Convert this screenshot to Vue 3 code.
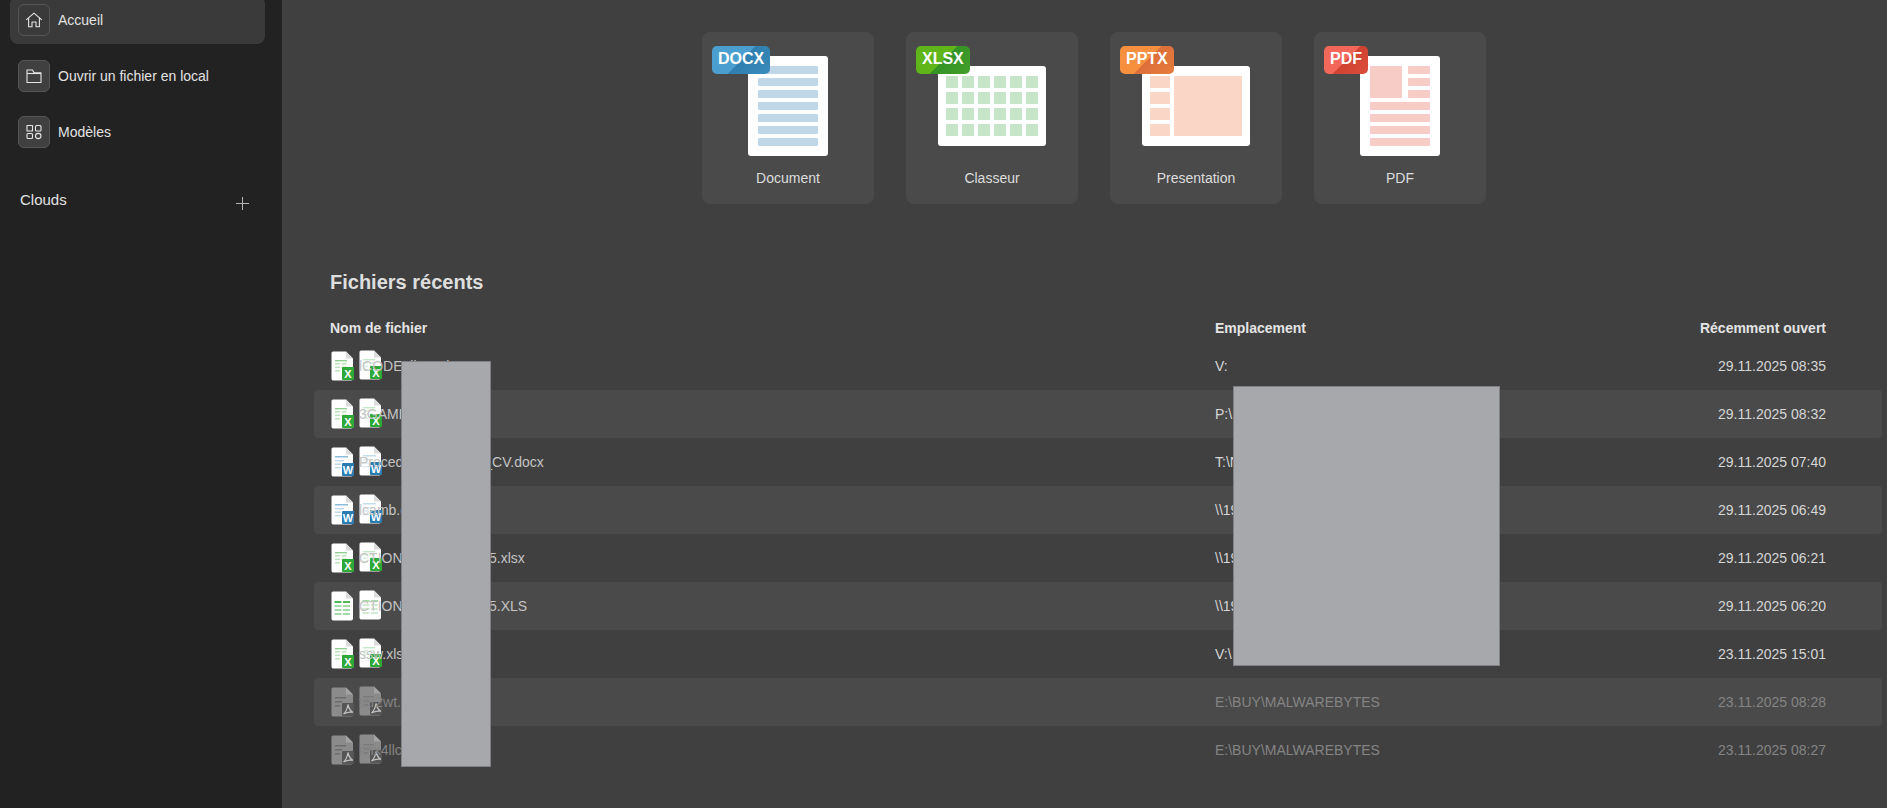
<template>
  <div class="app">
    <aside class="sidebar">
      <nav class="nav">
        <div v-for="item in navItems" :key="item.label" class="nav-item" :class="{ active: item.active }">
          <span class="nav-icon">
            <svg width="18" height="18" viewBox="0 0 18 18" fill="none" stroke="#e6e6e6" stroke-width="1.1" stroke-linejoin="round">
              <path v-for="d in item.paths" :key="d" :d="d" />
            </svg>
          </span>
          <span>{{ item.label }}</span>
        </div>
      </nav>
      <div class="clouds">
        <span>Clouds</span>
        <svg class="plus" width="13" height="13" viewBox="0 0 13 13" stroke="#b4b4b4" stroke-width="1">
          <path d="M6.5 0V13M0 6.5H13" />
        </svg>
      </div>
    </aside>

    <main class="main">
      <section class="cards">
        <div v-for="card in cards" :key="card.label" class="card">
          <svg class="card-art" width="172" height="130" viewBox="0 0 172 130">
            <rect :x="card.sheet[0]" :y="card.sheet[1]" :width="card.sheet[2]" :height="card.sheet[3]" rx="3" fill="#fff" />
            <rect v-for="(r, i) in card.rects" :key="i" :x="r[0]" :y="r[1]" :width="r[2]" :height="r[3]" rx="1" :fill="card.tint" />
          </svg>
          <span class="badge" :class="card.cls">{{ card.badge }}</span>
          <span class="card-label">{{ card.label }}</span>
        </div>
      </section>

      <h2 class="title">Fichiers récents</h2>

      <div class="table">
        <div class="row head">
          <span>Nom de fichier</span>
          <span>Emplacement</span>
          <span class="date">Récemment ouvert</span>
        </div>
        <div v-for="(f, i) in files" :key="i" class="row" :class="{ dim: f.type === 'pdf' }">
          <span class="name">
            <span class="icons">
              <svg v-for="n in 2" :key="n" class="file-icon" :class="{ ghost: n === 2 }" width="24" height="30" viewBox="0 0 24 30">
                <path d="M2 .5H15L22 7.5V27.5Q22 29.5 20 29.5H2Q.5 29.5 .5 27.5V2Q.5 .5 2 .5Z" :fill="f.type === 'pdf' ? '#8b8b8b' : '#fff'" />
                <path d="M15 .5V7.5H22Z" :fill="f.type === 'pdf' ? '#a3a3a3' : '#dcdcdc'" />
                <g v-if="f.type === 'xlsx'" class="lines" fill="#bfe3c0">
                  <rect x="4" y="9" width="12" height="1.4" fill="#8fd092" />
                  <rect x="4" y="12" width="5" height="1.6" />
                  <rect x="10.5" y="12" width="5" height="1.6" />
                  <rect x="4" y="15.5" width="5" height="1.6" />
                  <rect x="10.5" y="15.5" width="5" height="1.6" />
                  <rect x="4" y="19" width="5" height="1.6" />
                </g>
                <g v-if="f.type === 'xls'" class="lines" fill="#a6dba8">
                  <rect x="3.5" y="10" width="7" height="2" fill="#4fb855" />
                  <rect x="12" y="10" width="7" height="2" fill="#4fb855" />
                  <rect x="3.5" y="14" width="7" height="2" />
                  <rect x="12" y="14" width="7" height="2" />
                  <rect x="3.5" y="18" width="7" height="2" />
                  <rect x="12" y="18" width="7" height="2" />
                  <rect x="3.5" y="22" width="7" height="2" />
                  <rect x="12" y="22" width="7" height="2" />
                </g>
                <g v-if="f.type === 'docx'" class="lines" fill="#bcd6e8">
                  <rect x="4" y="9" width="13" height="1.5" fill="#8dbbdb" />
                  <rect x="4" y="13" width="9" height="1.4" />
                  <rect x="4" y="16.5" width="6" height="1.4" />
                  <rect x="4" y="20" width="6" height="1.4" />
                </g>
                <g v-if="f.type === 'pdf'" class="lines" fill="#6c6c6c">
                  <rect x="4" y="10" width="11" height="1.5" />
                  <rect x="4" y="14" width="7" height="1.5" />
                  <rect x="4" y="18" width="5" height="1.5" />
                </g>
                <template v-if="f.type === 'xlsx' || f.type === 'docx'">
                  <rect x="11" y="16" width="12" height="13" rx="1" :fill="f.type === 'xlsx' ? '#2ea836' : '#2a7db3'" />
                  <text x="17" y="27" text-anchor="middle" class="icon-letter">{{ f.type === 'xlsx' ? 'X' : 'W' }}</text>
                </template>
                <template v-if="f.type === 'pdf'">
                  <rect x="11" y="16" width="12" height="13" rx="1" fill="#565656" />
                  <path d="M17 17.5C16.5 21.5 15.2 24.5 12.5 27C15.5 25.2 18.5 24.7 21.8 25.3C19.3 24 17.8 21 17 17.5Z" fill="none" stroke="#bdbdbd" stroke-width="1.3" />
                </template>
              </svg>
            </span>
            <span class="name-text">{{ f.name }}</span>
          </span>
          <span>{{ f.path }}</span>
          <span class="date">{{ f.date }}</span>
        </div>
      </div>

      <div class="mask mask-names"></div>
      <div class="mask mask-paths"></div>
    </main>
  </div>
</template>

<script setup>
// lignes du document / grille : x, y, largeur, hauteur
const repeat = (n, fn) => Array.from({ length: n }, (_, i) => fn(i));

const navItems = [
  { label: 'Accueil', active: true, paths: ['M1.2 8.8L9 2.2L16.8 8.8', 'M3.6 7V15.8H7V11H11V15.8H14.4V7'] },
  { label: 'Ouvrir un fichier en local', paths: ['M2 15.5V3H7.5L9 5.8H16V15.5Z', 'M2 6.5H16'] },
  {
    label: 'Modèles',
    paths: [
      'M2 2.5H7.5V8H2Z',
      'M10.5 3.5Q10.5 2.5 11.5 2.5H15Q16 2.5 16 3.5V7Q16 8 15 8H11.5Q10.5 8 10.5 7Z',
      'M2 11.5Q2 10.5 3 10.5H6.5Q7.5 10.5 7.5 11.5V14.5Q7.5 15.5 6.5 15.5H3Q2 15.5 2 14.5Z',
      'M10.5 13a2.75 2.6 0 1 0 5.5 0a2.75 2.6 0 1 0 -5.5 0Z',
    ],
  },
];

const cards = [
  {
    label: 'Document', badge: 'DOCX', cls: 'blue', tint: '#bfd7e6',
    sheet: [46, 24, 80, 100],
    rects: repeat(7, (i) => [56, 34 + i * 12, 60, 8]),
  },
  {
    label: 'Classeur', badge: 'XLSX', cls: 'green', tint: '#c6e4c7',
    sheet: [32, 34, 108, 80],
    rects: repeat(24, (i) => [40 + (i % 6) * 16, 44 + Math.floor(i / 6) * 16, 12, 12]),
  },
  {
    label: 'Presentation', badge: 'PPTX', cls: 'orange', tint: '#f9d6c5',
    sheet: [32, 34, 108, 80],
    rects: [...repeat(4, (i) => [40, 44 + i * 16, 20, 12]), [64, 44, 68, 60]],
  },
  {
    label: 'PDF', badge: 'PDF', cls: 'red', tint: '#f7cbc6',
    sheet: [46, 24, 80, 100],
    rects: [
      [56, 34, 32, 32],
      ...repeat(3, (i) => [94, 34 + i * 12, 22, 8]),
      ...repeat(4, (i) => [56, 70 + i * 12, 60, 8]),
    ],
  },
];

const files = [
  { type: 'xlsx', name: 'lCODE_liste.xlsx', path: 'V:', date: '29.11.2025 08:35' },
  { type: 'xlsx', name: '3GAME_suivi.xlsx', path: 'P:\\', date: '29.11.2025 08:32' },
  { type: 'docx', name: 'Procedure_modeles_CV.docx', path: 'T:\\N', date: '29.11.2025 07:40' },
  { type: 'docx', name: 'lcamb.docx', path: '\\\\192', date: '29.11.2025 06:49' },
  { type: 'xlsx', name: 'CTION_rapporti_2025.xlsx', path: '\\\\192', date: '29.11.2025 06:21' },
  { type: 'xls', name: 'CTION_rapporti_2025.XLS', path: '\\\\192', date: '29.11.2025 06:20' },
  { type: 'xlsx', name: 'ssw.xlsx', path: 'V:\\', date: '23.11.2025 15:01' },
  { type: 'pdf', name: 'tar2wt.pdf', path: 'E:\\BUY\\MALWAREBYTES', date: '23.11.2025 08:28' },
  { type: 'pdf', name: 'imx4llc.pdf', path: 'E:\\BUY\\MALWAREBYTES', date: '23.11.2025 08:27' },
];
</script>

<style>
html, body {
  margin: 0;
  height: 100%;
  overflow: hidden;
  background: #404040;
}
</style>

<style scoped>
.app {
  display: flex;
  height: 808px;
  font-family: "Liberation Sans", Arial, sans-serif;
  font-size: 14px;
  color: #d6d6d6;
  overflow: hidden;
}
.sidebar {
  width: 282px;
  flex-shrink: 0;
  box-sizing: border-box;
  padding: 0 17px 0 10px;
  background: #222222;
}
.nav {
  display: flex;
  flex-direction: column;
  gap: 8px;
  margin-top: -4px;
}
.nav-item {
  display: flex;
  align-items: center;
  gap: 8px;
  height: 48px;
  padding: 0 8px;
  border-radius: 8px;
  color: #e2e2e2;
}
.nav-item.active {
  background: #3a3a3a;
}
.nav-icon {
  display: flex;
  align-items: center;
  justify-content: center;
  box-sizing: border-box;
  width: 32px;
  height: 32px;
  background: #404040;
  border: 1px solid #555555;
  border-radius: 6px;
}
.active .nav-icon {
  background: #3a3a3a;
}
.clouds {
  display: flex;
  align-items: center;
  justify-content: space-between;
  height: 20px;
  margin-top: 33px;
  padding: 0 16px 0 10px;
  font-size: 15px;
  color: #e2e2e2;
}
.plus {
  margin-top: 9px;
}

.main {
  position: relative;
  flex: 1;
  box-sizing: border-box;
  padding: 32px 5px 0 32px;
  background: #404040;
}
.cards {
  display: flex;
  justify-content: center;
  gap: 32px;
  padding-right: 8px;
}
.card {
  position: relative;
  display: flex;
  flex-direction: column;
  align-items: center;
  width: 172px;
  height: 172px;
  background: #4a4a4a;
  border-radius: 8px;
}
.card-art {
  display: block;
}
.card-label {
  line-height: 32px;
  color: #dddddd;
}
.badge {
  position: absolute;
  left: 10px;
  top: 14px;
  height: 28px;
  padding: 0 6px;
  border-radius: 5px;
  font-size: 16px;
  font-weight: 700;
  line-height: 26px;
  color: #fff;
}
.blue { background: linear-gradient(135deg, #4a9fd0 0, #4a9fd0 51%, #2f7fb0 51%, #3a8cbc 100%); }
.green { background: linear-gradient(135deg, #5fb51a 0, #5fb51a 51%, #359226 51%, #43a02a 100%); }
.orange { background: linear-gradient(135deg, #f68f3e 0, #f68f3e 51%, #dc6f3a 51%, #e67c3c 100%); }
.red { background: linear-gradient(135deg, #f2675a 0, #f2675a 51%, #cf4230 51%, #dc4f3c 100%); }

.title {
  margin: 66px 0 20px 16px;
  font-size: 20px;
  font-weight: 700;
  line-height: 24px;
  color: #dedede;
}
.table {
  display: flex;
  flex-direction: column;
}
.row {
  display: grid;
  grid-template-columns: 885px 1fr auto;
  align-items: center;
  height: 48px;
  padding: 0 56px 0 16px;
  border-radius: 4px;
}
.row:nth-child(odd):not(.head) {
  background: #4a4a4a;
}
.row.head {
  height: 28px;
  font-weight: 700;
  color: #e4e4e4;
}
.row.dim {
  color: #848484;
}
.date {
  text-align: right;
}
.name {
  display: flex;
  align-items: center;
}
.icons {
  position: relative;
  display: block;
  width: 29px;
  height: 30px;
}
.file-icon {
  position: absolute;
  left: 1px;
  top: 0;
  overflow: visible;
}
/* la deuxième icône se superpose au nom de fichier */
.file-icon.ghost {
  left: 29px;
  top: -1px;
}
.ghost .lines {
  opacity: 0.5;
}
.icon-letter {
  font-family: "Liberation Sans", Arial, sans-serif;
  font-size: 11px;
  font-weight: 700;
  fill: #fff;
}
.name-text {
  position: relative;
  z-index: 1;
  color: #c4c4c4;
}
.dim .name-text {
  color: #848484;
}
.mask {
  position: absolute;
  z-index: 2;
  box-sizing: border-box;
  background: #a7a8ab;
  border: 1px solid #808185;
}
.mask-names {
  left: 119px;
  top: 361px;
  width: 90px;
  height: 406px;
}
.mask-paths {
  left: 951px;
  top: 386px;
  width: 267px;
  height: 280px;
}
</style>
